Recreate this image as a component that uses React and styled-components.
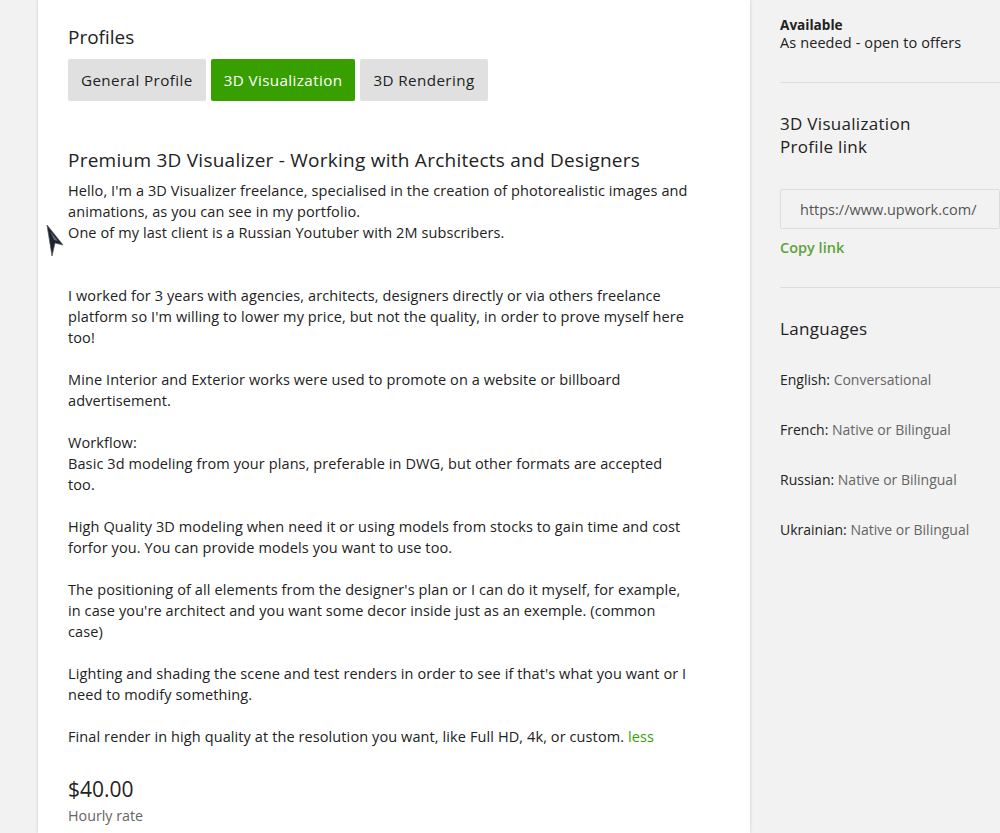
import styled, {createGlobalStyle} from 'styled-components'

const GlobalStyle = createGlobalStyle`
  html, body {
    margin: 0;
    padding: 0;
    background: #f2f2f2;
  }
  body {
    font-family: "Open Sans", "Noto Sans", sans-serif;
    color: #222;
    -webkit-font-smoothing: antialiased;
  }
`

const Page = styled.div`
  display: flex;
  align-items: stretch;
  min-height: 833px;
  padding-left: 38px;
  position: relative;
`

const Card = styled.main`
  width: 712px;
  box-sizing: border-box;
  padding: 26px 30px 0;
  background: #fff;
  box-shadow: 0 0 3px rgba(0, 0, 0, 0.18);
`

const Sidebar = styled.aside`
  width: 250px;
  box-sizing: border-box;
  padding: 16px 0 0 30px;
`

const SectionTitle = styled.h2`
  margin: 0;
  font-size: 19px;
  font-weight: 500;
  line-height: 22px;
  color: #222;
`

const Tabs = styled.div`
  display: flex;
  gap: 5px;
  margin-top: 11px;
`

const Tab = styled.button`
  height: 42px;
  padding: 0 13px;
  border: none;
  border-radius: 2px;
  font-family: inherit;
  font-size: 15.2px;
  font-weight: 500;
  letter-spacing: 0.4px;
  cursor: pointer;
  background: ${p => (p.active ? '#37a000' : '#e0e0e0')};
  color: ${p => (p.active ? '#fff' : '#222')};
`

const JobTitle = styled.h3`
  margin: 47px 0 0;
  font-size: 19px;
  font-weight: 500;
  line-height: 24px;
  letter-spacing: 0.25px;
  color: #222;
`

const Description = styled.p`
  max-width: 622px;
  margin: 8px 0 0;
  font-size: 14.5px;
  line-height: 21px;
  letter-spacing: 0.1px;
  color: #222;
  white-space: pre-line;
`

const GreenLink = styled.a`
  color: #37a000;
  text-decoration: none;
  cursor: pointer;
`

const Rate = styled.div`
  margin-top: 30px;
  font-size: 21px;
  line-height: 24px;
  color: #222;
`

const RateLabel = styled.div`
  margin-top: 6px;
  font-size: 14.3px;
  line-height: 18px;
  color: #656565;
`

const Block = styled.section`
  padding: ${p => p.pad || '0'};
  border-bottom: ${p => (p.last ? 'none' : '1px solid #ddd')};
`

const SmallBold = styled.div`
  font-size: 13.6px;
  font-weight: 700;
  line-height: 17px;
`

const SmallText = styled.div`
  font-size: 14.5px;
  line-height: 19px;
  letter-spacing: 0.1px;
  color: #222;
`

const SideTitle = styled.h4`
  margin: 0;
  font-size: 17px;
  font-weight: 500;
  line-height: 23px;
  letter-spacing: 0.3px;
  color: #222;
`

const LinkBox = styled.div`
  margin-top: 31px;
  height: 40px;
  box-sizing: border-box;
  border: 1px solid #ddd;
  border-radius: 2px;
  padding: 0 19px;
  display: flex;
  align-items: center;
  font-size: 14.5px;
  color: #555;
  white-space: nowrap;
  overflow: hidden;
`

const CopyLink = styled(GreenLink)`
  display: block;
  margin-top: 10px;
  font-size: 14.5px;
  font-weight: 600;
  line-height: 18px;
  color: #5fa23a;
`

const LangList = styled.ul`
  list-style: none;
  margin: 31px 0 0;
  padding: 0;
  display: flex;
  flex-direction: column;
  gap: 32px;
`

const LangItem = styled.li`
  font-size: 14px;
  line-height: 18px;
  color: #222;
`

const LangLevel = styled.span`
  color: #656565;
`

const Pointer = styled.svg`
  position: absolute;
  left: 46px;
  top: 224px;
  pointer-events: none;
`

const text = `Hello, I'm a 3D Visualizer freelance, specialised in the creation of photorealistic images and animations, as you can see in my portfolio.
One of my last client is a Russian Youtuber with 2M subscribers.


I worked for 3 years with agencies, architects, designers directly or via others freelance platform so I'm willing to lower my price, but not the quality, in order to prove myself here too!

Mine Interior and Exterior works were used to promote on a website or billboard advertisement.

Workflow:
Basic 3d modeling from your plans, preferable in DWG, but other formats are accepted too.

High Quality 3D modeling when need it or using models from stocks to gain time and cost forfor you. You can provide models you want to use too.

The positioning of all elements from the designer's plan or I can do it myself, for example, in case you're architect and you want some decor inside just as an exemple. (common case)

Lighting and shading the scene and test renders in order to see if that's what you want or I need to modify something.

Final render in high quality at the resolution you want, like Full HD, 4k, or custom. `

const languages = [
  {name: 'English', level: 'Conversational'},
  {name: 'French', level: 'Native or Bilingual'},
  {name: 'Russian', level: 'Native or Bilingual'},
  {name: 'Ukrainian', level: 'Native or Bilingual'},
]

export default function App() {
  return (
    <>
      <GlobalStyle />
      <Page>
        <Card>
          <SectionTitle>Profiles</SectionTitle>
          <Tabs>
            <Tab type="button">General Profile</Tab>
            <Tab type="button" active>
              3D Visualization
            </Tab>
            <Tab type="button">3D Rendering</Tab>
          </Tabs>
          <JobTitle>Premium 3D Visualizer - Working with Architects and Designers</JobTitle>
          <Description>
            {text}
            <GreenLink>less</GreenLink>
          </Description>
          <Rate>$40.00</Rate>
          <RateLabel>Hourly rate</RateLabel>
        </Card>
        <Sidebar>
          <Block pad="0 0 30px">
            <SmallBold>Available</SmallBold>
            <SmallText>As needed - open to offers</SmallText>
          </Block>
          <Block pad="29px 0 30px">
            <SideTitle>
              3D Visualization
              <br />
              Profile link
            </SideTitle>
            <LinkBox>https://www.upwork.com/</LinkBox>
            <CopyLink>Copy link</CopyLink>
          </Block>
          <Block pad="29px 0 0" last>
            <SideTitle>Languages</SideTitle>
            <LangList>
              {languages.map(l => (
                <LangItem key={l.name}>
                  {l.name}: <LangLevel>{l.level}</LangLevel>
                </LangItem>
              ))}
            </LangList>
          </Block>
        </Sidebar>
        <Pointer width="20" height="34" viewBox="0 0 20 34">
          <path d="M1 1 L17 21 L9 19 L6 32 Z" fill="#1c2230" stroke="#555" strokeWidth="0.7" />
          <path d="M4 7 L12 17 L8 16 Z" fill="#5a6878" />
        </Pointer>
      </Page>
    </>
  )
}
